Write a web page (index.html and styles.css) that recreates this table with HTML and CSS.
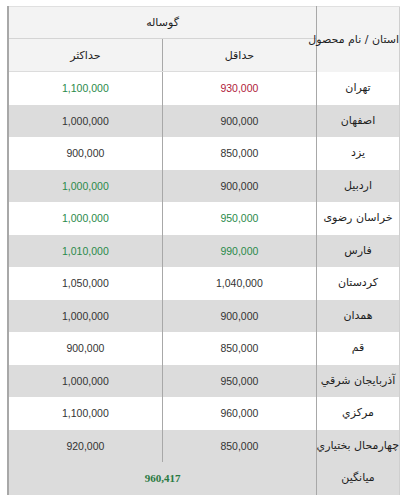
FILE: index.html
```html
<!DOCTYPE html>
<html lang="fa">
<head>
<meta charset="utf-8">
<link rel="stylesheet" href="styles.css">
</head>
<body>
<table class="prices" dir="rtl">
  <thead>
    <tr class="h1">
      <th class="prov-h" rowspan="2">استان / نام محصول</th>
      <th class="group" colspan="2">گوساله</th>
    </tr>
    <tr class="h2">
      <th class="col-min">حداقل</th>
      <th class="col-max">حداکثر</th>
    </tr>
  </thead>
  <tbody>
    <tr><td class="prov">تهران</td><td class="red">930,000</td><td class="green">1,100,000</td></tr>
    <tr class="alt"><td class="prov">اصفهان</td><td>900,000</td><td>1,000,000</td></tr>
    <tr><td class="prov">یزد</td><td>850,000</td><td>900,000</td></tr>
    <tr class="alt"><td class="prov">اردبیل</td><td>900,000</td><td class="green">1,000,000</td></tr>
    <tr><td class="prov">خراسان رضوی</td><td class="green">950,000</td><td class="green">1,000,000</td></tr>
    <tr class="alt"><td class="prov">فارس</td><td class="green">990,000</td><td class="green">1,010,000</td></tr>
    <tr><td class="prov">کردستان</td><td>1,040,000</td><td>1,050,000</td></tr>
    <tr class="alt"><td class="prov">همدان</td><td>900,000</td><td>1,000,000</td></tr>
    <tr><td class="prov">قم</td><td>850,000</td><td>900,000</td></tr>
    <tr class="alt"><td class="prov">آذربایجان شرقي</td><td>950,000</td><td>1,000,000</td></tr>
    <tr><td class="prov">مرکزي</td><td>960,000</td><td>1,100,000</td></tr>
    <tr class="alt"><td class="prov">چهارمحال بختياري</td><td>850,000</td><td>920,000</td></tr>
    <tr class="alt avg"><td class="prov">میانگین</td><td class="avg-val" colspan="2">960,417</td></tr>
  </tbody>
</table>
</body>
</html>
```
FILE: styles.css
```css
html, body {
  margin: 0;
  padding: 0;
  background: #ffffff;
}
body {
  padding: 6px 7px 0 7px;
  font-family: "Liberation Sans", "DejaVu Sans", sans-serif;
  font-size: 10.5px;
  color: #333333;
}
.prices {
  width: 393px;
  border-collapse: collapse;
  table-layout: fixed;
  border-top: 1px solid #e0e0e0;
  border-right: 1px solid #cfcfcf;
  border-left: 2px solid #a8a8a8;
}
.prices th {
  font-weight: normal;
  background: #f3f3f3;
  color: #1e1e1e;
  font-family: "DejaVu Sans", sans-serif;
  font-size: 11px;
  padding: 0;
}
.prices .h1 th.group {
  height: 31px;
  border-bottom: 1px solid #d4d4d4;
}
.prices .h2 th {
  height: 32px;
  border-bottom: 1px solid #dcdcdc;
}
.prov-h {
  width: 82px;
  text-align: right;
  border-left: 1px solid #a8a8a8;
  white-space: nowrap;
  letter-spacing: -0.4px;
}
.col-min {
  width: 156px;
  border-left: 1px solid #a8a8a8;
}
.prices td {
  height: 32.5px;
  padding: 0;
  line-height: 14px;
  text-align: center;
  border-left: 1px solid #a8a8a8;
}
.prices td:last-child {
  border-left: none;
}
.prices td.prov {
  font-family: "DejaVu Sans", sans-serif;
  font-size: 11px;
  color: #1e1e1e;
  white-space: nowrap;
  letter-spacing: -0.3px;
}
.prices tr.alt td {
  background: #dcdcdc;
}
.red {
  color: #b0203a;
}
.green {
  color: #2a8a4a;
}
.avg-val {
  color: #2a7a42;
  font-family: "Liberation Serif", serif;
  font-weight: bold;
  font-size: 11px;
}
```
